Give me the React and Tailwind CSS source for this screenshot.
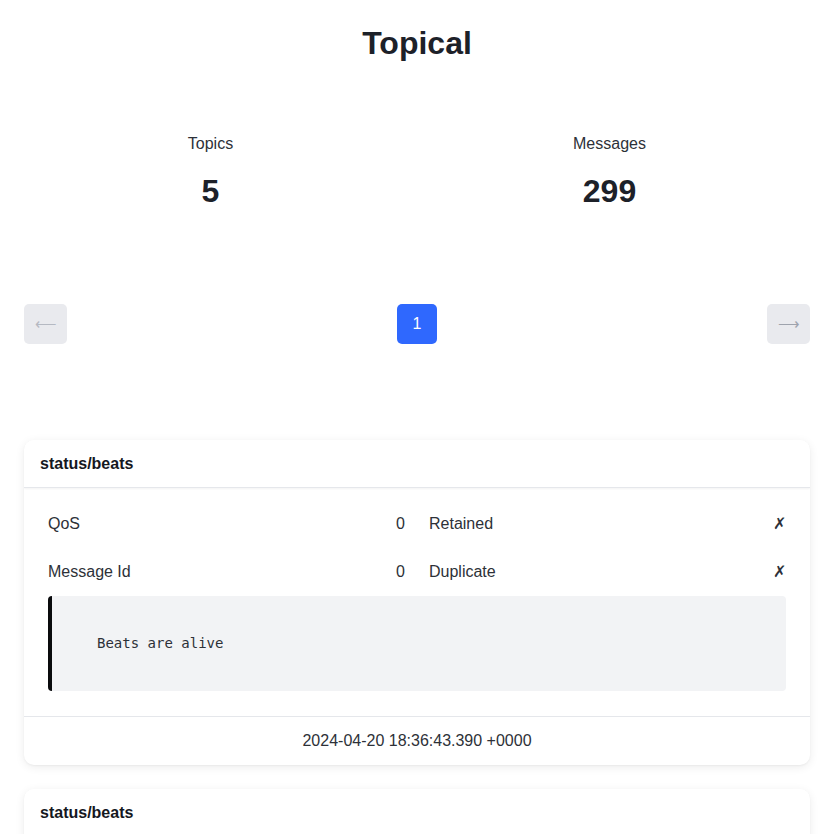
const rows = [
  [
    ["QoS", "0"],
    ["Retained", "✗"],
  ],
  [
    ["Message Id", "0"],
    ["Duplicate", "✗"],
  ],
];

const MessageCard = ({ topic, payload, time }) => {
  return (
    <article className="bg-white rounded-[10px] shadow-[0_1px_2px_rgba(0,0,0,0.04),0_2px_10px_rgba(0,0,0,0.08)] overflow-hidden">
      <header className="h-[48px] flex items-center px-4 border-b border-[#e5e7eb] shadow-[0_1px_2px_rgba(0,0,0,0.05)] bg-white text-[16px] font-bold text-[#15181e]">
        {topic}
      </header>
      <div className="px-6 pt-[12px] pb-[25px]">
        {rows.map((row, i) => (
          <div key={i} className="grid grid-cols-2 gap-6 h-[48px] items-center text-[16px] text-[#2d3138]">
            {row.map(([label, value]) => (
              <div key={label} className="flex justify-between">
                <span>{label}</span>
                <span>{value}</span>
              </div>
            ))}
          </div>
        ))}
        <pre className="h-[95px] flex items-center bg-[#f2f3f5] border-l-4 border-[#0a0b0d] rounded-[4px] pl-[45px] font-['DejaVu_Sans_Mono',monospace] text-[14px] text-[#2d3138]">
          {payload}
        </pre>
      </div>
      <footer className="h-[49px] flex items-center justify-center border-t border-[#e5e7eb] text-[16px] text-[#2d3138]">
        {time}
      </footer>
    </article>
  );
};

const App = () => {
  return (
    <div className="min-h-screen bg-white font-['Liberation_Sans',Arial,sans-serif] text-[#2d3138]">
      <main className="px-6">
        <h1 className="pt-[24px] h-[62px] text-center text-[32px] font-bold leading-[38px] text-[#1d2129]">Topical</h1>
        <div className="flex mt-[69px] ml-[-13px]">
          <div className="w-[399px] flex flex-col items-center">
            <p className="text-[16px] leading-[26px]">Topics</p>
            <p className="mt-[16px] text-[32px] font-bold leading-[36px] text-[#1d2129]">5</p>
          </div>
          <div className="w-[399px] flex flex-col items-center">
            <p className="text-[16px] leading-[26px]">Messages</p>
            <p className="mt-[16px] text-[32px] font-bold leading-[36px] text-[#1d2129]">299</p>
          </div>
        </div>
        <nav className="mt-[95px] flex items-center justify-between">
          <button className="w-[43px] h-[40px] rounded-[5px] bg-[#e9eaee] text-[#b5b9c2] text-[15px] flex items-center justify-center">
            ⟵
          </button>
          <button className="w-[40px] h-[40px] rounded-[5px] bg-[#2f68fe] text-white text-[16px] flex items-center justify-center">
            1
          </button>
          <button className="w-[43px] h-[40px] rounded-[5px] bg-[#e9eaee] text-[#9ea3ad] text-[15px] flex items-center justify-center">
            ⟶
          </button>
        </nav>
        <div className="mt-[96px] flex flex-col gap-6 pb-6">
          <MessageCard topic="status/beats" payload="Beats are alive" time="2024-04-20 18:36:43.390 +0000" />
          <MessageCard topic="status/beats" payload="Beats are alive" time="2024-04-20 18:35:43.388 +0000" />
        </div>
      </main>
    </div>
  );
};

export default App;
